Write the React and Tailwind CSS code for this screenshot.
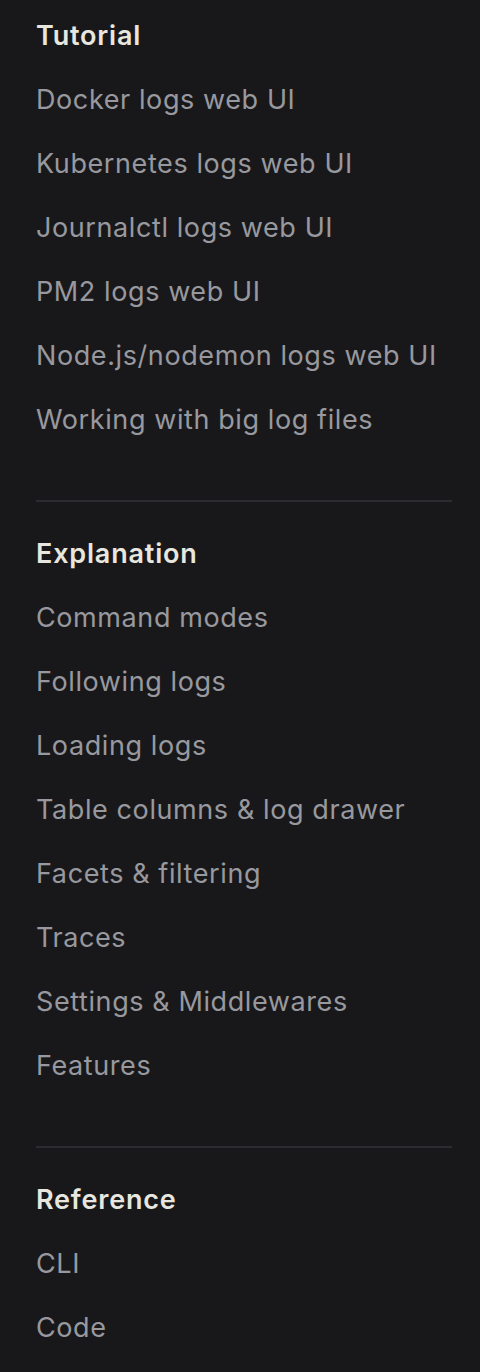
const sections = [
  {
    title: 'Tutorial',
    items: [
      'Docker logs web UI',
      'Kubernetes logs web UI',
      'Journalctl logs web UI',
      'PM2 logs web UI',
      'Node.js/nodemon logs web UI',
      'Working with big log files',
    ],
  },
  {
    title: 'Explanation',
    items: [
      'Command modes',
      'Following logs',
      'Loading logs',
      'Table columns & log drawer',
      'Facets & filtering',
      'Traces',
      'Settings & Middlewares',
      'Features',
    ],
  },
  {
    title: 'Reference',
    items: ['CLI', 'Code'],
  },
];

export default function App() {
  return (
    <div className="min-h-[1372px] bg-[#18181b] pl-9 pr-7 pt-[4px] font-['Inter',sans-serif]">
      {sections.map((section, i) => (
        <div key={section.title}>
          {i > 0 && <div className="mt-12 mb-5 h-[2px] bg-[#2c2c30]" />}
          <div className="flex h-16 items-center text-[27px] font-semibold tracking-[0.03em] text-[#e7e7df]">
            {section.title}
          </div>
          {section.items.map((item) => (
            <div key={item} className="flex h-16 items-center text-[27px] tracking-[0.022em] text-[#98989f]">
              {item}
            </div>
          ))}
        </div>
      ))}
    </div>
  );
}
